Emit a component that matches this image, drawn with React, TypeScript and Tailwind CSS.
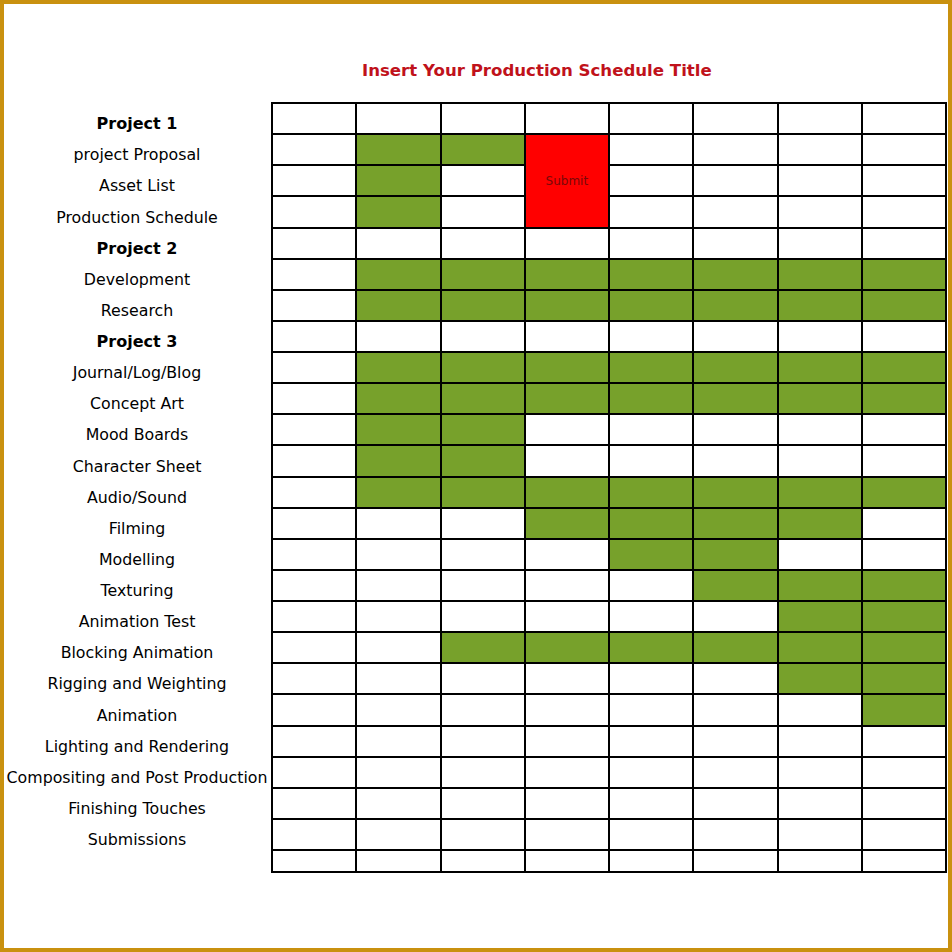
import React from 'react';

type Task = { name: string; bold?: boolean; green: number[] };

// green = filled column indexes (0-based, 8 columns)
const tasks: Task[] = [
    { name: 'Project 1', bold: true, green: [] },
    { name: 'project Proposal', green: [1, 2] },
    { name: 'Asset List', green: [1] },
    { name: 'Production Schedule', green: [1] },
    { name: 'Project 2', bold: true, green: [] },
    { name: 'Development', green: [1, 2, 3, 4, 5, 6, 7] },
    { name: 'Research', green: [1, 2, 3, 4, 5, 6, 7] },
    { name: 'Project 3', bold: true, green: [] },
    { name: 'Journal/Log/Blog', green: [1, 2, 3, 4, 5, 6, 7] },
    { name: 'Concept Art', green: [1, 2, 3, 4, 5, 6, 7] },
    { name: 'Mood Boards', green: [1, 2] },
    { name: 'Character Sheet', green: [1, 2] },
    { name: 'Audio/Sound', green: [1, 2, 3, 4, 5, 6, 7] },
    { name: 'Filming', green: [3, 4, 5, 6] },
    { name: 'Modelling', green: [4, 5] },
    { name: 'Texturing', green: [5, 6, 7] },
    { name: 'Animation Test', green: [6, 7] },
    { name: 'Blocking Animation', green: [2, 3, 4, 5, 6, 7] },
    { name: 'Rigging and Weighting', green: [6, 7] },
    { name: 'Animation', green: [7] },
    { name: 'Lighting and Rendering', green: [] },
    { name: 'Compositing and Post Production', green: [] },
    { name: 'Finishing Touches', green: [] },
    { name: 'Submissions', green: [] },
    { name: '', green: [] },
];

const cols = [0, 1, 2, 3, 4, 5, 6, 7];

// merged "Submit" cell covers rows 1-3 of column 3
const isMerged = (row: number, col: number) => col === 3 && row >= 1 && row <= 3;

const App = () => {
    return (
        <div
            className="w-[952px] h-[952px] border-4 border-[#c9910f] bg-white text-black"
            style={{ fontFamily: '"DejaVu Sans", Verdana, sans-serif' }}
        >
            <div className="pt-[57px] pl-[358px] text-[16.6px] leading-[20px] font-bold text-[#c0121b]">
                Insert Your Production Schedule Title
            </div>

            <div className="mt-[21px] flex">
                {/* Task labels */}
                <div className="w-[266px] pt-[2px] grid grid-rows-[repeat(24,31.125px)_22px]">
                    {tasks.map((t, i) => (
                        <div
                            key={i}
                            className={`flex items-end justify-center pb-[2px] leading-[18px] whitespace-nowrap ${
                                t.bold ? 'text-[16px] font-bold' : 'text-[15.8px]'
                            }`}
                        >
                            {t.name}
                        </div>
                    ))}
                </div>

                {/* Schedule grid */}
                <div className="ml-[1px] w-[676px] grid grid-cols-8 grid-rows-[repeat(24,31.125px)_22px] border-l-2 border-t-2 border-black">
                    <div className="col-start-4 row-start-2 row-span-3 flex items-center justify-center border-r-2 border-b-2 border-black bg-[#ff0000] text-[12px] text-[#7a0808]">
                        Submit
                    </div>
                    {tasks.map((t, r) =>
                        cols
                            .filter((c) => !isMerged(r, c))
                            .map((c) => (
                                <div
                                    key={`${r}-${c}`}
                                    className={`border-r-2 border-b-2 border-black ${
                                        t.green.includes(c) ? 'bg-[#77a12b]' : 'bg-white'
                                    }`}
                                />
                            ))
                    )}
                </div>
            </div>
        </div>
    );
};

export default App;
